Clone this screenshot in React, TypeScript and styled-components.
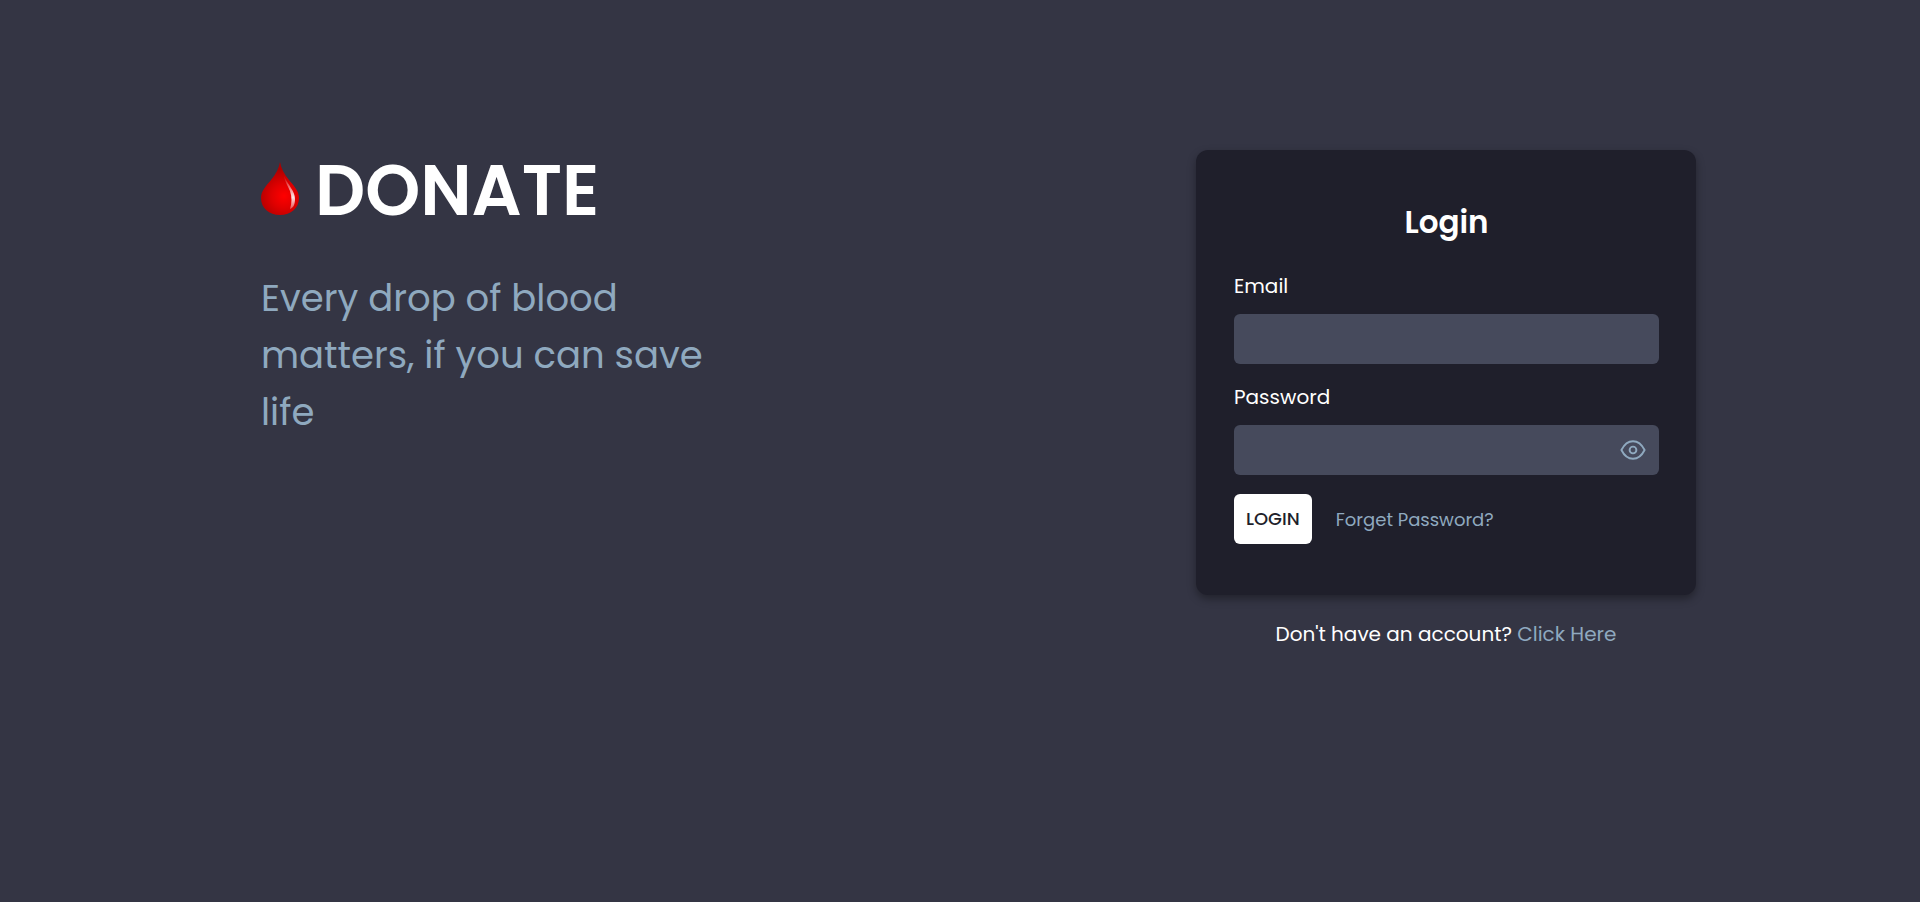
import React, { useState } from "react";
import styled, { createGlobalStyle } from "styled-components";

const GlobalStyle = createGlobalStyle`
  * { box-sizing: border-box; }
  body {
    margin: 0;
    min-height: 100vh;
    background: #343544;
    color: #ffffff;
    font-family: Poppins, Inter, sans-serif;
  }
`;

const Page = styled.main`
  display: flex;
  flex-wrap: wrap;
  justify-content: space-between;
  align-items: flex-start;
  gap: 40px;
  max-width: 1520px;
  margin: 0 auto;
  padding: 150px 24px 40px;
`;

const Intro = styled.section`
  width: 500px;
  max-width: 100%;
  padding: 0 0 0 37px;
`;

const Brand = styled.div`
  display: flex;
  align-items: flex-start;
  gap: 16px;
  padding-top: 12px;
`;

const Drop = styled.svg`
  flex: none;
  width: 38px;
  height: 54px;
`;

const BrandName = styled.h1`
  margin: 0;
  font-size: 70px;
  line-height: 58px;
  font-weight: 600;
`;

const Tagline = styled.p`
  margin: 50px 0 0;
  color: #8fa9bf;
  font-size: 37px;
  line-height: 57px;
`;

const LoginColumn = styled.section`
  width: 500px;
  max-width: 100%;
`;

const Card = styled.form`
  padding: 48px 37px 51px 38px;
  border-radius: 12px;
  background: #1f1f2b;
  box-shadow: 0 4px 8px rgba(0, 0, 0, 0.35);
`;

const Title = styled.h2`
  margin: 0 0 25px;
  font-size: 31px;
  line-height: 48px;
  font-weight: 600;
  text-align: center;
`;

const Field = styled.div`
  display: flex;
  flex-direction: column;
  gap: 13px;
  margin-bottom: 18px;

  & + & {
    margin-bottom: 19px;
  }
`;

const Label = styled.label`
  font-size: 20px;
  line-height: 30px;
`;

const InputWrap = styled.div`
  position: relative;
`;

const Input = styled.input`
  display: block;
  width: 100%;
  height: 50px;
  padding: 0 48px 0 12px;
  border: 0;
  border-radius: 6px;
  background: #464a5c;
  color: #ffffff;
  font: inherit;
  font-size: 18px;
`;

const RevealButton = styled.button`
  position: absolute;
  top: 12px;
  right: 13px;
  display: flex;
  padding: 0;
  border: 0;
  background: none;
  color: #8fa9bf;
  cursor: pointer;
`;

const Actions = styled.div`
  display: flex;
  align-items: center;
  gap: 24px;
`;

const SubmitButton = styled.button`
  height: 50px;
  padding: 0 12px 2px;
  border: 0;
  border-radius: 6px;
  background: #ffffff;
  color: #1f1f2b;
  font: inherit;
  font-size: 18px;
  font-weight: 500;
  cursor: pointer;
`;

const TextLink = styled.a`
  color: #8fa9bf;
  text-decoration: none;
`;

const ForgotLink = styled(TextLink)`
  font-size: 18px;
`;

const SignUp = styled.p`
  margin: 24px 0 0;
  font-size: 20px;
  line-height: 30px;
  text-align: center;
`;

function BloodDrop() {
  return (
    <Drop viewBox="0 0 38 54" aria-hidden="true">
      <defs>
        <radialGradient id="blood" cx="23" cy="34" r="27" gradientUnits="userSpaceOnUse">
          <stop offset="0" stopColor="#ff0000" />
          <stop offset="0.45" stopColor="#e00000" />
          <stop offset="1" stopColor="#ad0000" />
        </radialGradient>
        <linearGradient id="shine" x1="26" y1="17" x2="32" y2="46" gradientUnits="userSpaceOnUse">
          <stop offset="0" stopColor="#ffffff" stopOpacity="0.1" />
          <stop offset="0.65" stopColor="#ffffff" stopOpacity="0.9" />
          <stop offset="1" stopColor="#ffffff" stopOpacity="0.35" />
        </linearGradient>
        <filter id="soften" x="-30%" y="-10%" width="160%" height="120%">
          <feGaussianBlur stdDeviation="0.7" />
        </filter>
      </defs>
      <path
        d="M19 0C20 6 23 12 28 18C33 24 38 29 38 36C38 46 30 53 19 53C8 53 0 46 0 36C0 29 5 24 10 18C15 12 18 6 19 0Z"
        fill="url(#blood)"
      />
      <path
        d="M23 14C27 23 34 29 34 37C34 43 32 46 29 47C31 41 31 35 29 29C27 24 24 20 23 14Z"
        fill="url(#shine)"
        filter="url(#soften)"
      />
    </Drop>
  );
}

function EyeIcon() {
  return (
    <svg
      width="26"
      height="26"
      viewBox="0 0 26 26"
      fill="none"
      stroke="currentColor"
      strokeWidth="1.9"
      strokeLinecap="round"
      strokeLinejoin="round"
      aria-hidden="true"
    >
      <path d="M1.4 13C4.3 7.2 8.2 4.2 13 4.2S21.7 7.2 24.6 13C21.7 18.8 17.8 21.8 13 21.8S4.3 18.8 1.4 13Z" />
      <circle cx="13" cy="13" r="3.4" />
    </svg>
  );
}

export default function App() {
  const [visible, setVisible] = useState(false);

  return (
    <>
      <GlobalStyle />
      <Page>
        <Intro>
          <Brand>
            <BloodDrop />
            <BrandName>DONATE</BrandName>
          </Brand>
          <Tagline>Every drop of blood matters, if you can save life</Tagline>
        </Intro>
        <LoginColumn>
          <Card onSubmit={(event) => event.preventDefault()}>
            <Title>Login</Title>
            <Field>
              <Label htmlFor="email">Email</Label>
              <Input id="email" type="email" autoComplete="email" />
            </Field>
            <Field>
              <Label htmlFor="password">Password</Label>
              <InputWrap>
                <Input
                  id="password"
                  type={visible ? "text" : "password"}
                  autoComplete="current-password"
                />
                <RevealButton
                  type="button"
                  aria-label="Show password"
                  aria-pressed={visible}
                  onClick={() => setVisible(!visible)}
                >
                  <EyeIcon />
                </RevealButton>
              </InputWrap>
            </Field>
            <Actions>
              <SubmitButton type="submit">LOGIN</SubmitButton>
              <ForgotLink href="#forgot">Forget Password?</ForgotLink>
            </Actions>
          </Card>
          <SignUp>
            Don't have an account? <TextLink href="#signup">Click Here</TextLink>
          </SignUp>
        </LoginColumn>
      </Page>
    </>
  );
}
